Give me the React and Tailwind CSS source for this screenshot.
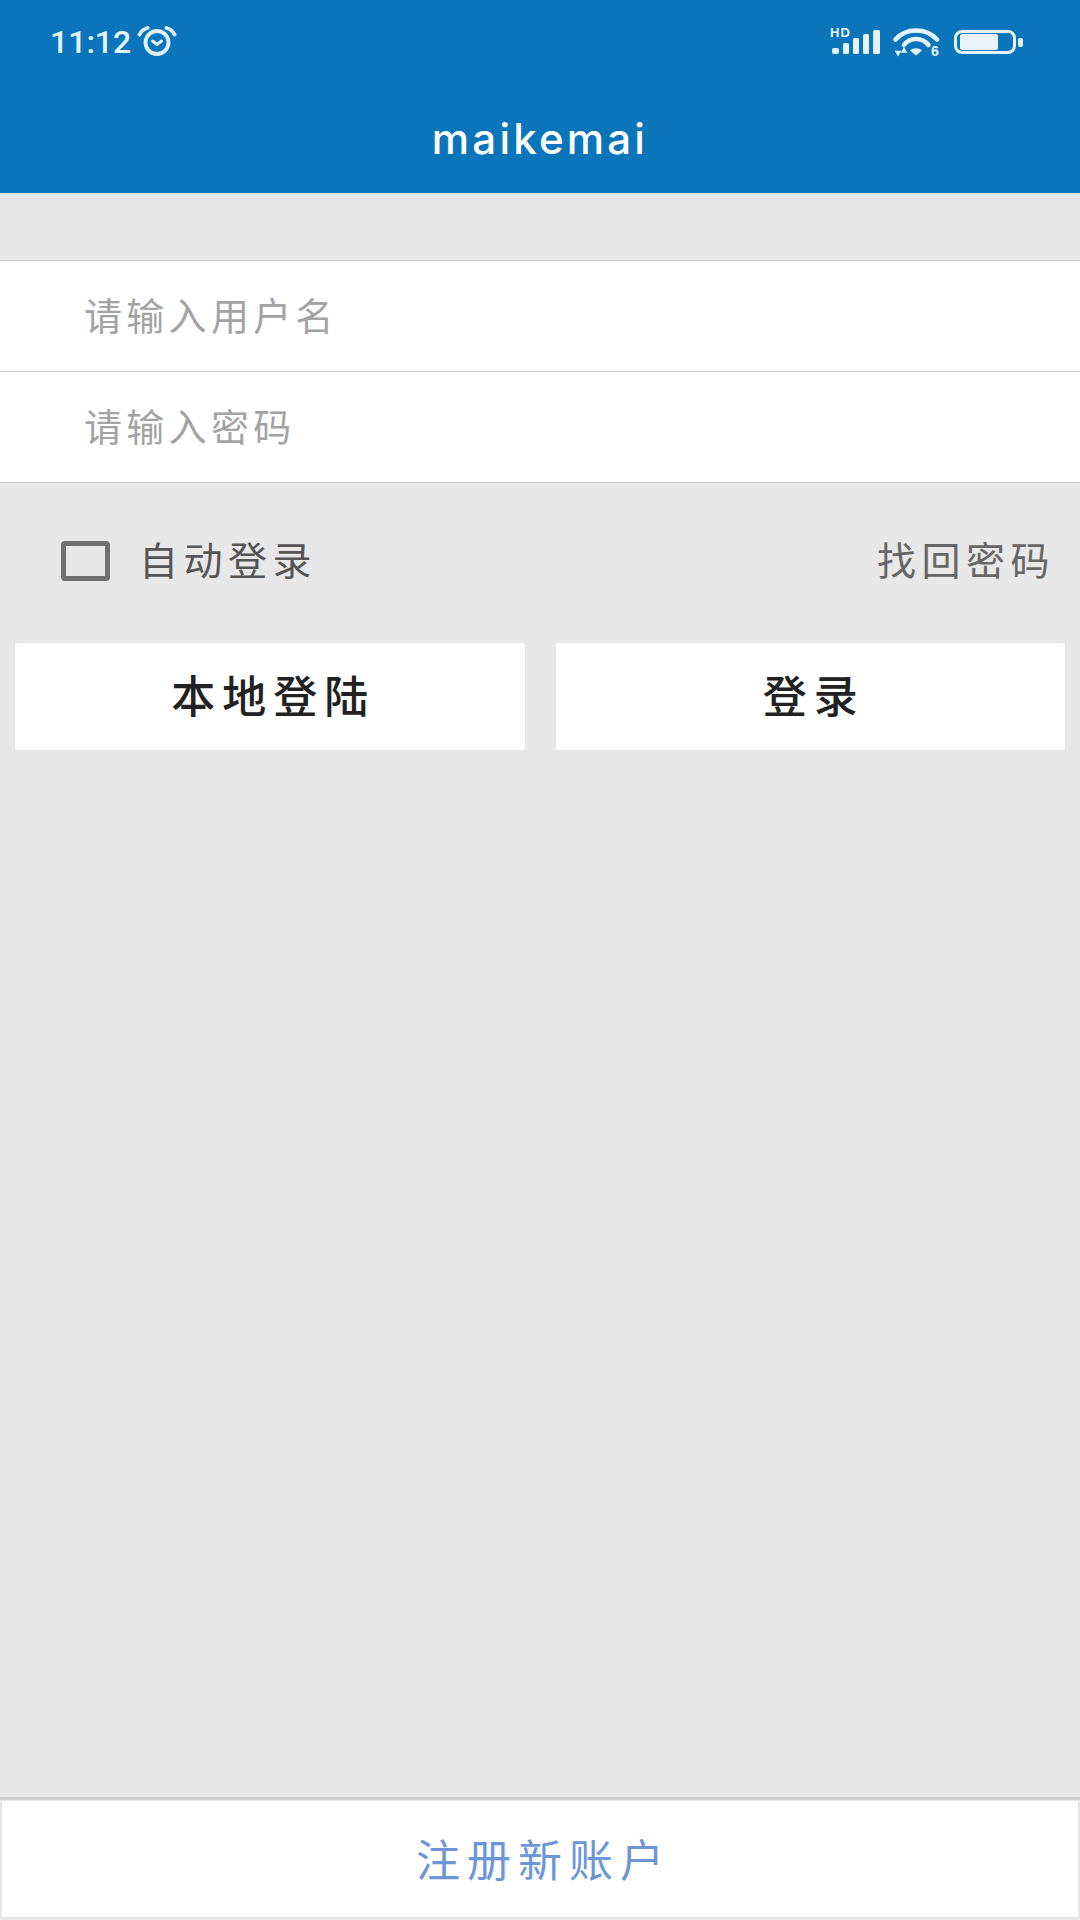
const cjk = { fontFamily: '"Noto Sans CJK SC", sans-serif' }
const labelFont = { fontFamily: '"Liberation Sans", sans-serif' }

const AlarmIcon = () => (
    <svg width="40" height="30" viewBox="0 0 40 30" fill="none" stroke="#dff1fb" strokeWidth="3.8" strokeLinecap="round" strokeLinejoin="round">
        <circle cx="20" cy="16.5" r="11.5" />
        <path d="M15.5 15 20 18.500l4.500-3.500" strokeWidth="3" />
        <path d="M2.500 8.500C4 5.500 7 3 10.500 2" />
        <path d="M37.500 8.500C36 5.500 33 3 29.500 2" />
    </svg>
)

const SignalIcon = () => (
    <svg width="48" height="26" viewBox="0 0 48 26" fill="#e3f2fb" className="overflow-visible">
        <text x="-2" y="8" fontSize="13" fontWeight="700" letterSpacing="1" style={labelFont}>HD</text>
        <rect x="0" y="19" width="7" height="6" rx="2" />
        <rect x="11" y="14" width="6" height="11" rx="1.500" />
        <rect x="21" y="9" width="6" height="16" rx="1.500" />
        <rect x="31" y="5" width="6" height="20" rx="1.500" />
        <rect x="41" y="1" width="7" height="24" rx="1.500" />
    </svg>
)

const WifiIcon = () => (
    <svg width="48" height="28" viewBox="0 0 48 28" fill="none" stroke="#e3f2fb" strokeWidth="4.5" strokeLinecap="round" className="overflow-visible">
        <path d="M2.500 11.500C13-.5 33-.5 44 11.500" />
        <path d="M11 17C17 9 29 9 35.500 17" />
        <path d="M17 22.500C20 19.500 26 19.500 29 22.500L23 27.500Z" fill="#e3f2fb" stroke="none" />
        <path d="M3 23.500h4L5 27ZM9 24h4L11 20.500Z" fill="#e3f2fb" strokeWidth="1.500" strokeLinecap="butt" />
        <text x="38" y="28" fontSize="14" fontWeight="700" fill="#e3f2fb" stroke="none" style={labelFont}>6</text>
    </svg>
)

const BatteryIcon = () => (
    <div className="flex items-center gap-[2px]">
        <div className="w-[62px] h-[24px] rounded-[8px] border-[3px] border-[#e3f2fb] px-[3px] py-[1px]">
            <div className="w-[38px] h-full rounded-[2px] bg-[#e8f3fb]" />
        </div>
        <div className="w-[5px] h-[9px] rounded-[2px] bg-[#e3f2fb]" />
    </div>
)

const InputRow = ({ placeholder, last }) => (
    <div className={`flex items-center pl-[84px] pb-[6px] bg-white ${last ? 'h-[110px]' : 'h-[111px] border-b border-[#d0d0d0]'}`}>
        <span className="text-[38px] tracking-[4.3px] text-[#a3a3a3]" style={cjk}>{placeholder}</span>
    </div>
)

const ActionButton = ({ label }) => (
    <button className="h-[107px] rounded-[2px] bg-white flex items-center justify-center pb-[6px] pl-[7px] shadow-[0_0_1px_#d4d4d4]">
        <span className="text-[44px] font-medium tracking-[7px] text-[#222]" style={cjk}>{label}</span>
    </button>
)

const App = () => {
    return (
        <div className="w-[1080px] h-[1920px] flex flex-col bg-[#e8e8e8]" style={cjk}>
            {/* Header */}
            <header className="h-[193px] bg-[#0a75ba] flex flex-col">
                <div className="h-[84px] flex items-center justify-between pl-[50px] pr-[57px]">
                    <div className="flex items-center gap-[6px]">
                        <span className="text-[32px] font-medium text-[#e3f2fb]" style={{ fontFamily: 'Roboto, sans-serif' }}>11:12</span>
                        <div className="pb-[2px]">
                            <AlarmIcon />
                        </div>
                    </div>
                    <div className="flex items-center gap-[13px]">
                        <SignalIcon />
                        <WifiIcon />
                        <BatteryIcon />
                    </div>
                </div>
                <div className="flex-1 flex items-center justify-center">
                    <h1 className="text-[42px] font-medium tracking-[3.2px] text-white" style={{ fontFamily: 'Inter, sans-serif' }}>maikemai</h1>
                </div>
            </header>

            {/* Form */}
            <div className="mt-[67px] border-t border-b border-[#c9c9c9]">
                <InputRow placeholder="请输入用户名" />
                <InputRow placeholder="请输入密码" last />
            </div>

            {/* Options */}
            <div className="h-[100px] mt-[28px] flex items-center justify-between pl-[61px] pr-[25px]">
                <label className="flex items-center gap-[29px]">
                    <span className="w-[49px] h-[40px] shrink-0 rounded-[4px] border-[5px] border-[#707070]" />
                    <span className="pb-[5px] text-[39px] tracking-[5.5px] text-[#555]" style={cjk}>自动登录</span>
                </label>
                <span className="pb-[5px] text-[39px] tracking-[5.5px] text-[#666]" style={cjk}>找回密码</span>
            </div>

            <div className="mt-[32px] px-[15px] grid grid-cols-2 gap-[31px]">
                <ActionButton label="本地登陆" />
                <ActionButton label="登录" />
            </div>

            {/* Register */}
            <div className="mt-auto border-t-[3px] border-[#cecece] px-[2px] pb-[3px] pt-[1px]">
                <div className="h-[116px] bg-white flex items-center justify-center pb-[2px] pl-[7px]">
                    <span className="text-[44px] tracking-[7px] text-[#6c96d8]" style={cjk}>注册新账户</span>
                </div>
            </div>
        </div>
    )
}

export default App
